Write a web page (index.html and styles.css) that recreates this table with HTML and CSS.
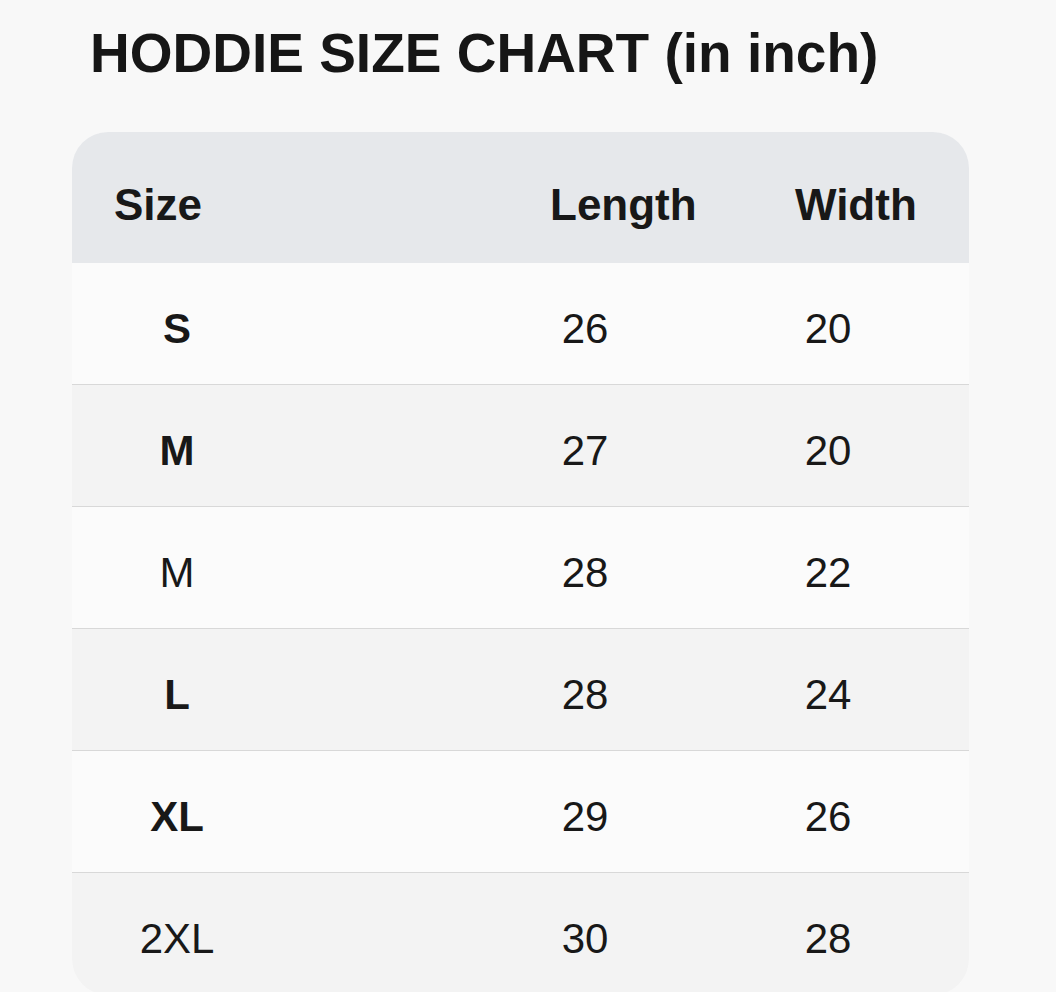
FILE: index.html
```
<!DOCTYPE html>
<html lang="en">
<head>
<meta charset="utf-8">
<title>Hoddie Size Chart</title>
<link rel="stylesheet" href="styles.css">
</head>
<body>
<main class="page">
  <h1 class="title">HODDIE SIZE CHART (in inch)</h1>
  <section class="card">
    <div class="row head">
      <div class="c1">Size</div>
      <div class="c2">Length</div>
      <div class="c3">Width</div>
    </div>
    <div class="row light">
      <div class="c1 strong">S</div>
      <div class="c2">26</div>
      <div class="c3">20</div>
    </div>
    <div class="row dark">
      <div class="c1 strong">M</div>
      <div class="c2">27</div>
      <div class="c3">20</div>
    </div>
    <div class="row light">
      <div class="c1">M</div>
      <div class="c2">28</div>
      <div class="c3">22</div>
    </div>
    <div class="row dark">
      <div class="c1 strong">L</div>
      <div class="c2">28</div>
      <div class="c3">24</div>
    </div>
    <div class="row light">
      <div class="c1 strong">XL</div>
      <div class="c2">29</div>
      <div class="c3">26</div>
    </div>
    <div class="row dark last">
      <div class="c1">2XL</div>
      <div class="c2">30</div>
      <div class="c3">28</div>
    </div>
  </section>
</main>
</body>
</html>
```
FILE: styles.css
```
html, body {
  margin: 0;
  padding: 0;
  background: #f8f8f8;
}
body {
  font-family: "Liberation Sans", Arial, sans-serif;
  color: #181818;
  height: 992px;
  overflow: hidden;
}
.page {
  padding: 21px 0 0 72px;
}
.title {
  margin: 0 0 47px 18px;
  font-size: 55px;
  font-weight: 700;
  line-height: normal;
  color: #161616;
}
.card {
  width: 897px;
  border-radius: 36px;
  overflow: hidden;
  background: #fbfbfb;
}
.row {
  display: grid;
  grid-template-columns: 210px 188px 230px 1fr;
  font-size: 42px;
  height: 122px;
  box-sizing: border-box;
  padding-top: 10px;
  line-height: 111px;
  border-bottom: 1px solid #d8d8d8;
  text-align: center;
}
.row .c1 { grid-column: 1; }
.row .c2 { grid-column: 3; }
.row .c3 { grid-column: 4; padding-right: 13px; }
.row.head {
  background: #e6e8eb;
  height: 131px;
  padding-top: 14px;
  line-height: 117px;
  font-size: 44px;
  font-weight: 700;
  text-align: left;
  border-bottom: none;
}
.row.head .c1 { padding-left: 42px; }
.row.head .c2 { padding-left: 80px; }
.row.head .c3 { padding-left: 95px; padding-right: 0; }
.light { background: #fbfbfb; }
.dark { background: #f3f3f3; }
.last { border-bottom: none; }
.strong { font-weight: 700; }
```
